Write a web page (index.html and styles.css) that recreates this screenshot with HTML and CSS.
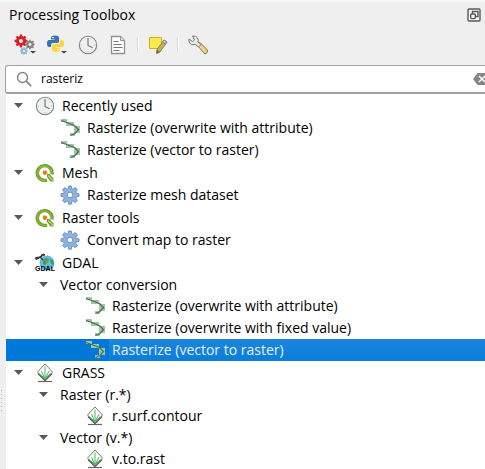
FILE: index.html
```
<!DOCTYPE html>
<html lang="en">
<head>
<meta charset="utf-8">
<title>Processing Toolbox</title>
<link rel="stylesheet" href="styles.css">
</head>
<body>
<svg class="defs" aria-hidden="true">
  <defs>
    <g id="cog">
      <circle r="5.2" fill="none" stroke="currentColor" stroke-width="4.6"/>
      <path d="M0-6V-9.500M0 6V9.500M-6 0H-9.500M6 0H9.500M-4.3-4.3l-2.4-2.400M4.3-4.3l2.4-2.400M-4.3 4.3l-2.4 2.400M4.3 4.3l2.4 2.400" stroke="currentColor" stroke-width="3.400"/>
    </g>
  </defs>
  <symbol id="clock" viewBox="0 0 20 20">
    <circle cx="10" cy="10" r="8.700" fill="#eef0ef" stroke="#858585" stroke-width="1.100"/>
    <path d="M10 3v7.500l4.500 2.300" fill="none" stroke="#777" stroke-width="1.200"/>
    <path d="M2.800 10h1M16.200 10h1M10 16.200v1" stroke="#aaa"/>
  </symbol>
  <symbol id="raster" viewBox="0 0 20 20">
    <path d="M1 1h6v3H1zM6 4h8v4H6zM14 8h6v7h-6zM10 15h5v3h-5z" fill="#9acb9e"/>
    <path d="M1 2.500L8 5 14.500 7.500 18.500 11.500 15 15.500 10.500 17.500" fill="none" stroke="#58635a" stroke-width="1.300"/>
  </symbol>
  <symbol id="qgis" viewBox="0 0 20 20">
    <path d="M12 17A7.400 7.400 0 1 1 16.900 11.500" fill="none" stroke="#6b9f2b" stroke-width="3.400"/>
    <path d="M11.500 17.300A7.300 7.300 0 1 1 16.900 11" fill="none" stroke="#8fb832" stroke-width="1.500"/>
    <path d="M12 11h2.500l4 4.500v3h-3L12 14z" fill="#6b9f2b"/>
    <path d="M13 12.500l5 5" stroke="#c1d86f" stroke-width="1.200"/>
    <path d="M8 7.500l3.500.3L12.500 10l-2.200 2.200-2.300-1.200z" fill="#ee7913"/>
  </symbol>
  <symbol id="gear" viewBox="0 0 20 20">
    <g fill="#8fb2df" stroke="#5683bd" stroke-width=".800">
      <path d="M8.700 1h2.600l.4 2.700 1.300.5 2.200-1.700 2.300 2.300-1.700 2.200.6 1.400 2.600.4v2.600l-2.600.4-.6 1.400 1.700 2.200-2.300 2.300-2.200-1.700-1.300.5-.4 2.700H8.700l-.4-2.700-1.300-.5-2.200 1.700-2.300-2.300 1.700-2.200-.6-1.400L1 11.400V8.800l2.600-.4.6-1.400-1.700-2.200 2.300-2.300L7 4.200l1.300-.5z"/>
      <circle cx="10" cy="10" r="2.800" fill="#fff"/>
    </g>
  </symbol>
  <symbol id="grass" viewBox="0 0 20 20">
    <path d="M3 18.500h14" stroke="#666" stroke-width="1.200"/>
    <path d="M2.500 11L10 18.500l7.500-7.500L10 4z" fill="#555"/>
    <path d="M2.500 9L10 1l7.500 8-7.500 7.500z" fill="#fff" stroke="#777"/>
    <path d="M10 15.500V3.500M9.500 15L6.500 8M10.500 15l3.500-7M9.500 15L5 11.500M10.500 15l4.500-4" fill="none" stroke="#35b04b" stroke-width=".900"/>
  </symbol>
</svg>
<main class="panel">
  <header class="titlebar">
    <h1>Processing Toolbox</h1>
    <button class="dock" aria-label="Float panel">
      <svg viewBox="0 0 14 14" width="14" height="14"><rect x="1" y="1" width="12" height="12" rx="1" fill="#f6f6f6" stroke="#595955" stroke-width="1.400"/><path d="M5.500 6V3.500H11V8.500H9" fill="none" stroke="#595955" stroke-width="1.400"/><rect x="3.700" y="6" width="4.600" height="4.600" rx="1" fill="#f6f6f6" stroke="#595955" stroke-width="1.400"/></svg>
    </button>
  </header>
  <div class="toolbar" role="toolbar" aria-label="Processing tools">
    <button aria-label="Models"><svg viewBox="0 0 22 22" width="22" height="22">
      <g color="#d3222a" transform="translate(7 7) scale(.68)"><use href="#cog"/></g>
      <g color="#858585" transform="translate(16 10.500) scale(.5)"><use href="#cog"/></g>
      <g color="#92b1dc" transform="translate(10 17) scale(.4)"><use href="#cog"/></g>
      <path d="M16 17h6l-3 2.500z" fill="#444"/></svg></button>
    <button aria-label="Scripts"><svg viewBox="0 0 22 22" width="22" height="22">
      <path d="M5 5.500V3.500Q5 1.500 9 1.500t4 2v4Q13 9 11 9H7Q5 9 5 11v2H3Q1 13 1 9.500T3 6h6v-.5z" fill="#3875a8"/>
      <path d="M14 6h2q2 0 2 3.500T16 13h-6v.8h4v2q0 2.200-4 2.200t-4-2.200V12q0-2 2-2h4q2 0 2-2z" fill="#ffd43f"/>
      <circle cx="7" cy="3.600" r=".8" fill="#fff"/><circle cx="12" cy="16" r=".8" fill="#fff"/><path d="M15 17h6l-3 2.500z" fill="#444"/></svg></button>
    <button aria-label="History"><svg width="20" height="20"><use href="#clock"/></svg></button>
    <button aria-label="Results Viewer"><svg viewBox="0 0 20 20" width="20" height="20"><path d="M3.500 1.500h9l4 4v13h-13z" fill="#fff" stroke="#929292" stroke-width="1.300"/><path d="M12.500 1.500v4h4" fill="#ddd" stroke="#929292"/><path d="M5.500 6.500h5M5.500 9.500h8M5.500 12.500h9M5.500 15.500h6" stroke="#777"/></svg></button>
    <span class="divider"></span>
    <button aria-label="Edit Features In-Place"><svg viewBox="0 0 20 20" width="20" height="20"><path d="M1.500 2.500h12v11h-12z" fill="#fce94f" stroke="#cfb11a"/><path d="M16 5l3 2-7 10-3.500 1.500.5-4z" fill="#c7b24e" stroke="#77776c" stroke-width=".9"/><path d="M16 5l3 2-1.500 2-3-2z" fill="#c8cac6" stroke="#888"/><path d="M9 15l3 2-3.500 1.500z" fill="#666"/></svg></button>
    <span class="divider"></span>
    <button aria-label="Options"><svg viewBox="0 0 20 20" width="20" height="20"><path d="M9 10l3-2.500 7.500 7.500q.5 3-2.500 4z" fill="#edcd79" stroke="#7e6b3d" stroke-width=".9"/><path d="M1 4L4.500 6.500 6.500 5 4.500 1Q8 .5 9.500 3t.5 4l3 2.500-2.500 2.500-3-2.500Q3 10.500 1.500 8 .5 6 1 4z" fill="#e7e9e7" stroke="#777"/><path d="M12 11.500l5 5" stroke="#fff0b0"/></svg></button>
  </div>
  <label class="search">
    <svg viewBox="0 0 16 16" width="16" height="16" aria-hidden="true"><circle cx="6.500" cy="6.500" r="5" fill="none" stroke="#888" stroke-width="1.500"/><path d="M10.200 10.200l5 5" stroke="#888" stroke-width="1.800"/></svg>
    <input type="text" value="rasteriz" aria-label="Search">
    <button class="clear" aria-label="Clear search"><svg viewBox="0 0 18 14" width="18" height="14"><path d="M0 7l4.500-6H18v12H4.500z" fill="#858585"/><path d="M6 4l6 6M12 4l-6 6" stroke="#fff" stroke-width="1.500"/></svg></button>
  </label>
  <div class="body">
    <div class="grip"></div>
    <ul class="tree" role="tree">
      <li><div class="row group"><button class="toggle" aria-label="Collapse"></button><svg class="icon"><use href="#clock"/></svg><span>Recently used</span></div>
        <ul>
          <li class="row tool"><svg class="icon"><use href="#raster"/></svg><span>Rasterize (overwrite with attribute)</span></li>
          <li class="row tool"><svg class="icon"><use href="#raster"/></svg><span>Rasterize (vector to raster)</span></li>
        </ul></li>
      <li><div class="row group"><button class="toggle" aria-label="Collapse"></button><svg class="icon"><use href="#qgis"/></svg><span>Mesh</span></div>
        <ul><li class="row tool"><svg class="icon"><use href="#gear"/></svg><span>Rasterize mesh dataset</span></li></ul></li>
      <li><div class="row group"><button class="toggle" aria-label="Collapse"></button><svg class="icon"><use href="#qgis"/></svg><span>Raster tools</span></div>
        <ul><li class="row tool"><svg class="icon"><use href="#gear"/></svg><span>Convert map to raster</span></li></ul></li>
      <li><div class="row group"><button class="toggle" aria-label="Collapse"></button><svg class="icon" viewBox="0 0 20 20">
          <circle cx="12" cy="10" r="7.500" fill="#62b8df"/>
          <path d="M8 7l3-2 3 1-1 3-3 3-2-1zM15 6l3 1 1 5-3-1z" fill="#4c9b54"/>
          <path d="M10 7l3 1-1 2z" fill="#b09248"/>
          <path d="M0 5l3-1 1 1.500-3 1zM6 2l3-1 1 1-3 1z" fill="#555" stroke="#222" stroke-width=".800"/>
          <path d="M3 5l4-2M5 4l3 3" stroke="#333" stroke-width="1.400"/>
          <text x="10" y="18" class="gdal-word">GDAL</text></svg><span>GDAL</span></div>
        <ul><li><div class="row subgroup"><button class="toggle" aria-label="Collapse"></button><span>Vector conversion</span></div>
          <ul>
            <li class="row tool deep"><svg class="icon"><use href="#raster"/></svg><span>Rasterize (overwrite with attribute)</span></li>
            <li class="row tool deep"><svg class="icon"><use href="#raster"/></svg><span>Rasterize (overwrite with fixed value)</span></li>
            <li class="row tool deep selected"><svg class="icon"><use href="#raster"/></svg><span>Rasterize (vector to raster)</span></li>
          </ul></li></ul></li>
      <li><div class="row group"><button class="toggle" aria-label="Collapse"></button><svg class="icon"><use href="#grass"/></svg><span>GRASS</span></div>
        <ul>
          <li><div class="row subgroup"><button class="toggle" aria-label="Collapse"></button><span>Raster (r.*)</span></div>
            <ul><li class="row tool deep"><svg class="icon"><use href="#grass"/></svg><span>r.surf.contour</span></li></ul></li>
          <li><div class="row subgroup"><button class="toggle" aria-label="Collapse"></button><span>Vector (v.*)</span></div>
            <ul><li class="row tool deep"><svg class="icon"><use href="#grass"/></svg><span>v.to.rast</span></li></ul></li>
        </ul></li>
    </ul>
  </div>
</main>
</body>
</html>
```
FILE: styles.css
```
* { box-sizing: border-box; }
body {
  margin: 0;
  background: #efefef;
  color: #000;
  font: 14px/22px "Open Sans", "Noto Sans", sans-serif;
  overflow: hidden;
}
button {
  border: 0;
  padding: 0;
  background: none;
  flex: none;
}
svg { display: block; flex: none; }
ul { list-style: none; margin: 0; padding: 0; }
.defs { position: absolute; width: 0; height: 0; }
.panel {
  display: flex;
  flex-direction: column;
  min-height: 100vh;
  border-top: 2px solid #f6f6f6;
}
.titlebar {
  display: flex;
  align-items: center;
  justify-content: space-between;
  height: 26px;
  padding: 0 4px 0 9px;
}
h1 { margin: 0; font-size: 14px; font-weight: 400; }
.toolbar {
  display: flex;
  align-items: center;
  gap: 10px;
  height: 34px;
  padding-left: 14px;
}
.divider {
  width: 2px;
  height: 14px;
  margin: 0 -1px;
  background: #dadada;
  border-right: 1px solid #fff;
}
.search {
  display: flex;
  align-items: center;
  gap: 9px;
  height: 29px;
  margin: 3px 0 0 5px;
  padding-left: 10px;
  background: #fff;
  border: 1px solid #a0a0a0;
  border-width: 1px 0 2px 1px;
  border-radius: 3px 0 0 3px;
}
.search input {
  flex: 1;
  min-width: 0;
  padding: 0;
  border: 0;
  outline: 0;
  background: none;
  font: 12px/20px "Open Sans", "Noto Sans", sans-serif;
}
.clear { width: 12px; overflow: hidden; }
.body { display: flex; flex: 1; }
.grip {
  align-self: stretch;
  width: 6px;
  padding-top: 296px;
}
.grip::after {
  content: "";
  display: block;
  width: 1px;
  height: 22px;
  margin-left: 1px;
  background: repeating-linear-gradient(#b0b0b0 0 1px, transparent 1px 4px);
}
.tree { flex: 1; min-width: 0; background: #fff; }
.row {
  display: flex;
  align-items: center;
  height: 22px;
  white-space: nowrap;
}
.group { height: 23px; padding-left: 8px; }
.subgroup { height: 21px; padding-left: 33px; }
.tool { padding-left: 54px; }
.deep { padding-left: 79px; }
.icon { width: 20px; height: 20px; margin-right: 7px; overflow: visible; }
.toggle {
  width: 9px;
  height: 5px;
  margin-right: 12px;
  background: #595959;
  clip-path: polygon(0 0, 100% 0, 50% 100%);
}
.selected { color: #e3f1fc; background: #0078d7; }
.selected span {
  flex: 1;
  margin-left: -3px;
  padding-left: 3px;
  background: linear-gradient(#1b86dc, #0b7ddb);
}
.gdal-word {
  font: 700 7px "Liberation Sans Narrow", "Liberation Sans", sans-serif;
  text-anchor: middle;
}
```
